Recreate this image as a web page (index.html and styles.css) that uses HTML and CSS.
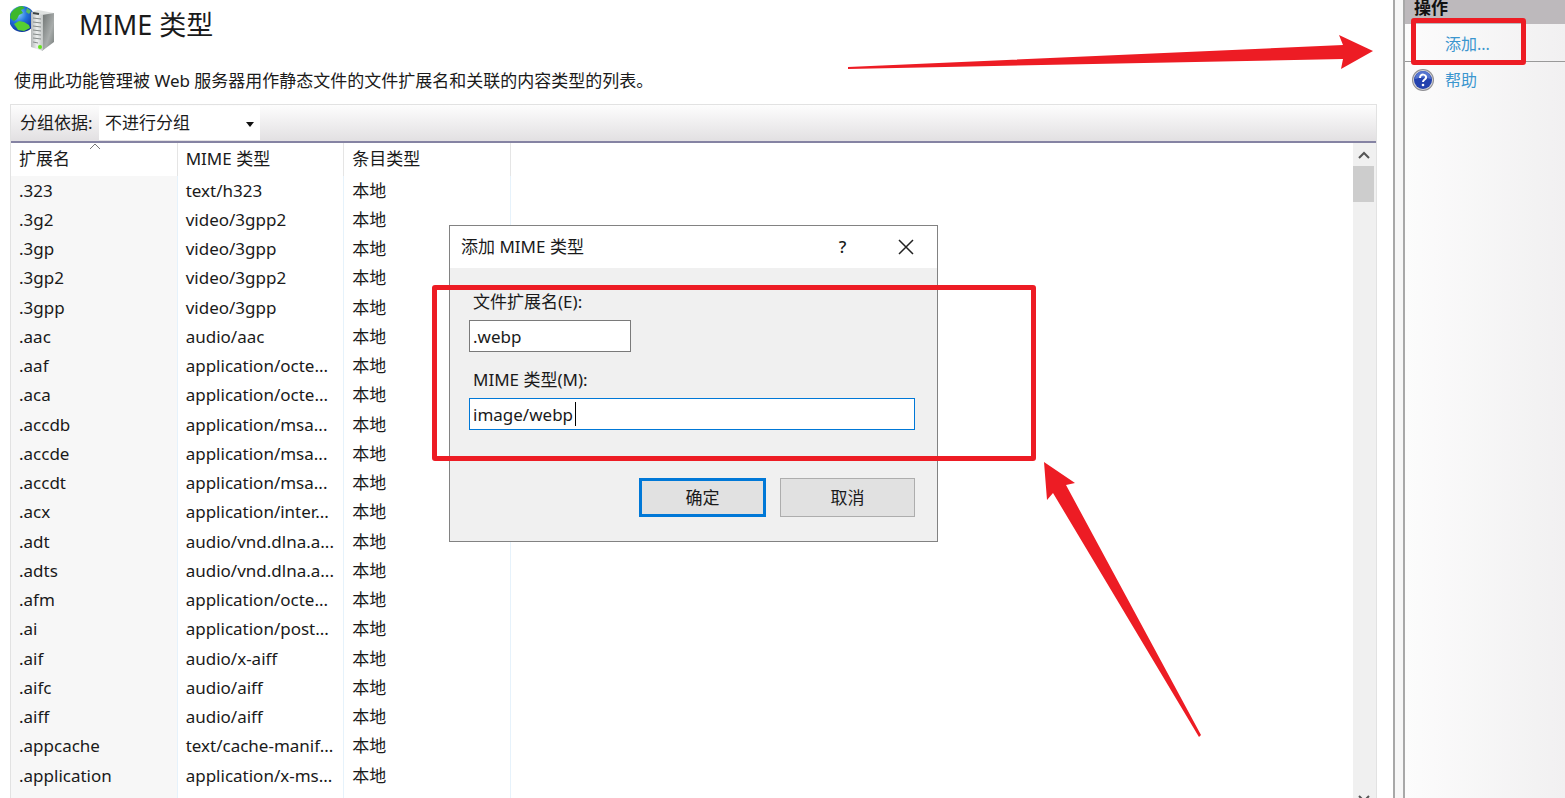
FILE: index.html
```html
<!DOCTYPE html>
<html lang="zh-CN">
<head>
  <meta charset="UTF-8" />
  <meta name="viewport" content="width=device-width, initial-scale=1.0"/>
  <title>MIME 类型</title>

  <link rel="stylesheet" href="styles.css">
</head>

<body>
  <main>
    <header>
      <svg class="logo" width="48" height="48" viewBox="1 0 48 48" aria-hidden="true">
        <defs>
          <radialGradient id="globe" cx="0.35" cy="0.3" r="0.75">
            <stop offset="0" stop-color="#8fd4ff"/>
            <stop offset="0.45" stop-color="#2372dc"/>
            <stop offset="1" stop-color="#0a2c94"/>
          </radialGradient>
          <linearGradient id="side" x1="0" y1="0" x2="1" y2="1">
            <stop offset="0" stop-color="#6d7271"/>
            <stop offset="0.6" stop-color="#a9adac"/>
            <stop offset="1" stop-color="#747a78"/>
          </linearGradient>
          <linearGradient id="front" x1="0" y1="0" x2="1" y2="0">
            <stop offset="0" stop-color="#b4b8b8"/>
            <stop offset="0.5" stop-color="#eceeee"/>
            <stop offset="1" stop-color="#c3c7c6"/>
          </linearGradient>
        </defs>
        <circle cx="13" cy="15" r="13" fill="url(#globe)"/>
        <path d="M2 9 Q6 3 13 2 L16 4 L12 6 L14 9 L10 11 L8 15 L5 17 L1 14Z" fill="#3db82b"/>
        <path d="M5 20 L10 17 L15 18 L20 21 L21 24 L15 27 L9 26Z" fill="#56cf31"/>
        <path d="M18 4 L22 7 L20 10 L17 8Z" fill="#57ba60"/>
        <path d="M22 8 L29 6 L45 9 L34 12Z" fill="#dfe2e1"/>
        <path d="M33 11 L45 9 L45 38 L33 47Z" fill="url(#side)"/>
        <path d="M22 8 L34 11 L34 47 L22 43Z" fill="url(#front)"/>
        <path d="M24 14l8 1M24 18l8 1M24 22l8 1M24 26l8 1M24 30l8 1M24 34l8 1M24 38l5 1" stroke="#858b8a" stroke-width="1"/>
        <path d="M24 9l6 1" stroke="#3e4444" stroke-width="2"/>
        <circle cx="31" cy="43" r="2" fill="#63e51b"/>
      </svg>
      <h1>MIME 类型</h1>
    </header>
    <p class="intro">使用此功能管理被 Web 服务器用作静态文件的文件扩展名和关联的内容类型的列表。</p>

    <section class="list">
      <div class="toolbar">
        <label for="group">分组依据:</label>
        <div class="group-by">
          <select id="group">
            <option>不进行分组</option>
          </select>
        </div>
      </div>

      <div class="rows">
        <table>
          <thead>
            <tr>
              <th class="sorted">扩展名
                <svg width="12" height="7" viewBox="0 0 12 7" aria-hidden="true"><path d="M1 6l5-5 5 5" fill="none" stroke="#777"/></svg>
              </th>
              <th>MIME 类型</th>
              <th>条目类型</th>
            </tr>
          </thead>
          <tbody>
            <tr><td>.323</td><td>text/h323</td><td>本地</td></tr>
            <tr><td>.3g2</td><td>video/3gpp2</td><td>本地</td></tr>
            <tr><td>.3gp</td><td>video/3gpp</td><td>本地</td></tr>
            <tr><td>.3gp2</td><td>video/3gpp2</td><td>本地</td></tr>
            <tr><td>.3gpp</td><td>video/3gpp</td><td>本地</td></tr>
            <tr><td>.aac</td><td>audio/aac</td><td>本地</td></tr>
            <tr><td>.aaf</td><td>application/octe...</td><td>本地</td></tr>
            <tr><td>.aca</td><td>application/octe...</td><td>本地</td></tr>
            <tr><td>.accdb</td><td>application/msa...</td><td>本地</td></tr>
            <tr><td>.accde</td><td>application/msa...</td><td>本地</td></tr>
            <tr><td>.accdt</td><td>application/msa...</td><td>本地</td></tr>
            <tr><td>.acx</td><td>application/inter...</td><td>本地</td></tr>
            <tr><td>.adt</td><td>audio/vnd.dlna.a...</td><td>本地</td></tr>
            <tr><td>.adts</td><td>audio/vnd.dlna.a...</td><td>本地</td></tr>
            <tr><td>.afm</td><td>application/octe...</td><td>本地</td></tr>
            <tr><td>.ai</td><td>application/post...</td><td>本地</td></tr>
            <tr><td>.aif</td><td>audio/x-aiff</td><td>本地</td></tr>
            <tr><td>.aifc</td><td>audio/aiff</td><td>本地</td></tr>
            <tr><td>.aiff</td><td>audio/aiff</td><td>本地</td></tr>
            <tr><td>.appcache</td><td>text/cache-manif...</td><td>本地</td></tr>
            <tr><td>.application</td><td>application/x-ms...</td><td>本地</td></tr>
            <tr class="filler"><td></td><td></td><td></td></tr>
          </tbody>
        </table>

        <div class="scrollbar" aria-hidden="true">
          <svg width="22" height="23" viewBox="0 0 22 23"><path d="M6 15l5-5 5 5" fill="none" stroke="#555" stroke-width="2"/></svg>
          <div class="thumb"></div>
          <svg class="down" width="22" height="10" viewBox="0 0 22 10"><path d="M6 8l5 5 5-5" fill="none" stroke="#555" stroke-width="2"/></svg>
        </div>
      </div>
    </section>

    <svg class="arrow arrow-top" width="528" height="36" viewBox="0 0 528 36" aria-hidden="true">
      <path d="M1 32 L496 10 L492 0 L526 16 L494 34 L496 24 L1 34Z" fill="#ed1c24"/>
    </svg>
  </main>

  <div class="splitter"></div>

  <aside>
    <h2>操作</h2>
    <div class="action add">
      <a href="#">添加...</a>
    </div>
    <div class="action">
      <svg width="24" height="24" viewBox="0 0 24 24" aria-hidden="true">
        <circle cx="12" cy="12" r="11" fill="#8e8e92"/>
        <circle cx="12" cy="12" r="10" fill="#d4d4d8"/>
        <circle cx="12" cy="12" r="9" fill="#2342ae"/>
        <path d="M4 11a8 8 0 0 1 16 0Q12 8 4 11Z" fill="#5575cf"/>
        <path d="M9 10c0-5 7-4 6 0-1 2-3 2-3 4" fill="none" stroke="#fff" stroke-width="2"/>
        <circle cx="12" cy="17" r="1.3" fill="#fff"/>
      </svg>
      <a href="#">帮助</a>
    </div>
  </aside>

  <form class="dialog" role="dialog" aria-labelledby="dialog-title">
    <div class="title">
      <h2 id="dialog-title">添加 MIME 类型</h2>
      <button type="button" aria-label="帮助">?</button>
      <button type="button" aria-label="关闭">
        <svg width="16" height="16" viewBox="0 0 16 16"><path d="M1 1l14 14M15 1L1 15" stroke="#222" stroke-width="1.5"/></svg>
      </button>
    </div>
    <div class="fields">
      <label for="ext">文件扩展名(E):</label>
      <input class="short" type="text" id="ext" value=".webp">
      <label for="mime">MIME 类型(M):</label>
      <div class="active">
        <input type="text" id="mime" value="image/webp">
      </div>
    </div>
    <div class="buttons">
      <button class="ok" type="button">确定</button>
      <button type="button">取消</button>
    </div>

    <div class="mark"></div>
    <svg class="arrow arrow-bottom" width="160" height="280" viewBox="0 0 160 280" aria-hidden="true">
      <path d="M1 1 L32 22 L23 24 L158 274 L156 276 L10 32 L4 39Z" fill="#ed1c24"/>
    </svg>
  </form>
</body>
</html>
```
FILE: styles.css
```css
*,
*::before,
*::after {
  box-sizing: border-box;
}

body {
  margin: 0;
  display: flex;
  height: 100vh;
  overflow: hidden;
  position: relative;
  background: #fff;
  color: #1a1a1a;
  font-family: "Noto Sans", "Noto Sans CJK SC", sans-serif;
  font-size: 17px;
  line-height: 24px;
}

h1,
h2,
p {
  margin: 0;
}

input,
select,
button {
  font: inherit;
  color: inherit;
}

main {
  flex: 1;
  min-width: 0;
  display: flex;
  flex-direction: column;
  position: relative;
  padding: 4px 16px 0 10px;
}

header {
  display: flex;
  gap: 21px;
  height: 48px;
}

h1 {
  font-size: 27px;
  font-weight: 400;
  line-height: 42px;
}

.intro {
  padding: 17px 4px 11px;
}

.list {
  flex: 1;
  min-height: 0;
  display: flex;
  flex-direction: column;
  border: 1px solid #e2e2e2;
  border-bottom: none;
}

.toolbar {
  display: flex;
  align-items: center;
  height: 38px;
  background: linear-gradient(#fdfdfd, #e2e0e2);
  border-bottom: 2px solid #8583a3;
}

.toolbar label {
  width: 88px;
  padding-left: 9px;
  white-space: nowrap;
}

.group-by {
  position: relative;
  width: 161px;
  height: 34px;
}

.group-by::after {
  content: "";
  position: absolute;
  right: 6px;
  top: 16px;
  border: 4px solid transparent;
  border-top: 5px solid #111;
}

.group-by select {
  appearance: none;
  width: 100%;
  height: 100%;
  padding: 0 6px;
  border: none;
  border-radius: 0;
  background: #fff;
}

.rows {
  flex: 1;
  min-height: 0;
  display: flex;
  justify-content: space-between;
}

table {
  width: 500px;
  height: 100%;
  table-layout: fixed;
  border-collapse: separate;
  border-spacing: 0;
}

th,
td {
  height: 29px;
  padding: 0 8px;
  border-right: 1px solid #e6f2fb;
  text-align: left;
  font-weight: 400;
  white-space: nowrap;
}

th {
  position: relative;
  height: 33px;
  padding-bottom: 2px;
  border-color: #e5e5e5;
}

.sorted svg {
  position: absolute;
  top: 0;
  left: 78px;
}

tbody tr:nth-child(4n) td {
  height: 30px;
}

td:first-child {
  background: #f7f7f7;
}

tbody .filler td {
  height: auto;
}

.scrollbar {
  display: flex;
  flex-direction: column;
  width: 23px;
  background: #f0f0f0;
}

.thumb {
  width: 21px;
  height: 36px;
  background: #cdcdcd;
}

.down {
  margin-top: auto;
}

.splitter {
  width: 12px;
  background: #f7f7f7;
  border-left: 2px solid #a8a8a8;
  border-right: 2px solid #a8a8a8;
}

aside {
  width: 160px;
  background: linear-gradient(to right, #fcfcfc, #f1f0f1);
  font-size: 16px;
}

aside h2 {
  height: 24px;
  padding-left: 9px;
  background: #bdb9bc;
  color: #111;
  font-size: 17px;
  line-height: 16px;
}

.action {
  display: flex;
  align-items: center;
  gap: 10px;
  height: 36px;
  padding-left: 6px;
}

.action a {
  color: #3c96cf;
  text-decoration: none;
}

.add {
  position: relative;
  height: 38px;
  padding: 2px 0 0 40px;
  border-bottom: 1px solid #999;
}

/* red highlight around the link */
.add::after {
  content: "";
  position: absolute;
  left: 6px;
  top: -6px;
  width: 115px;
  height: 47px;
  border: 5px solid #ed1c24;
  border-radius: 3px;
  pointer-events: none;
}

.dialog {
  position: absolute;
  left: 449px;
  top: 225px;
  width: 489px;
  border: 1px solid #828282;
  background: #f0f0f0;
}

.title {
  display: flex;
  align-items: center;
  height: 42px;
  padding-left: 11px;
  background: #fff;
}

.title h2 {
  flex: 1;
  font-size: 17px;
  font-weight: 400;
}

.title button {
  display: flex;
  align-items: center;
  justify-content: center;
  width: 63px;
  height: 40px;
  padding: 0;
  border: none;
  background: none;
  font-weight: 500;
}

.fields {
  padding: 22px 22px 0 19px;
}

.fields label {
  display: block;
  padding-left: 4px;
  margin-bottom: 6px;
}

.fields input {
  display: block;
  width: 100%;
  height: 32px;
  padding: 0 3px;
  border: 1px solid #7a7a7a;
  border-radius: 0;
  background: #fff;
}

.fields .short {
  width: 162px;
  margin-bottom: 16px;
}

.active {
  position: relative;
}

.fields .active input {
  border-color: #0078d7;
}

/* text cursor */
.active::after {
  content: "";
  position: absolute;
  left: 106px;
  top: 4px;
  width: 1px;
  height: 24px;
  background: #000;
}

.buttons {
  display: flex;
  justify-content: flex-end;
  gap: 14px;
  padding: 48px 22px 24px;
}

.buttons button {
  width: 135px;
  height: 39px;
  border: 1px solid #adadad;
  background: #e1e1e1;
}

.buttons .ok {
  width: 127px;
  border: 3px solid #0078d7;
}

.mark {
  position: absolute;
  left: -18px;
  top: 59px;
  width: 604px;
  height: 176px;
  border: 5px solid #ed1c24;
  border-radius: 3px;
  pointer-events: none;
}

.arrow {
  position: absolute;
  pointer-events: none;
}

.arrow-top {
  right: 18px;
  top: 35px;
}

.arrow-bottom {
  left: 593px;
  top: 235px;
}
```
